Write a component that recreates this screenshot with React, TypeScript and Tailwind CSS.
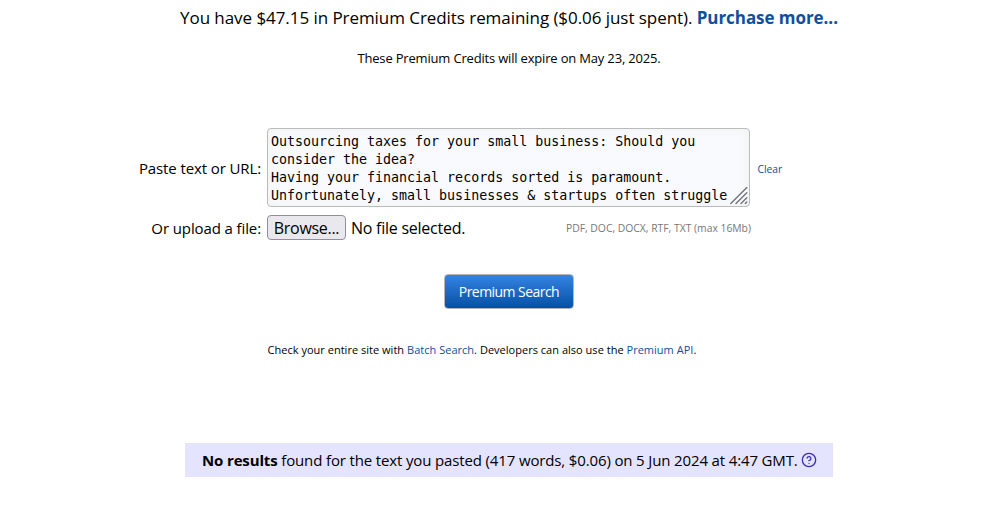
import { CircleHelp } from "lucide-react";

const pastedText = [
    "Outsourcing taxes for your small business: Should you",
    "consider the idea?",
    "Having your financial records sorted is paramount.",
    "Unfortunately, small businesses & startups often struggle",
];

function ResizeGrip() {
    return (
        <svg className="absolute right-px bottom-px" width="18" height="18" viewBox="0 0 18 18" fill="none" stroke="#74747c" strokeWidth="1.4" strokeLinecap="round">
            <path d="M0.8 16.5 16.8 0.5M6 16.5 16.8 5.7M11 16.5 16.8 10.7M15.3 16.5 16.8 15" />
        </svg>
    );
}

export default function App() {
    return (
        <div className="h-[528px] overflow-hidden bg-white pl-[15px] text-black font-['Open_Sans',sans-serif]">
            <p className="pt-[6px] text-center text-[17px] leading-6 tracking-[-0.06px] whitespace-nowrap">
                You have $47.15 in Premium Credits remaining ($0.06 just spent).{" "}
                <a href="#" className="font-bold text-[#0e509c]">Purchase more...</a>
            </p>
            <p className="mt-[19px] text-center text-[13px] leading-[18px] tracking-[-0.18px]">
                These Premium Credits will expire on May 23, 2025.
            </p>

            <form className="mt-[61px] -ml-[15px]">
                <div className="flex h-[79px] items-center">
                    <label className="mt-px w-[261px] text-right text-[15px] tracking-[-0.11px]">Paste text or URL:</label>
                    <div className="relative ml-1.5 h-[79px] w-[483px] rounded border border-[#bbb] bg-[#f8fafd] px-[3px] pt-[4px] shadow-[inset_0_0_10px_#f0f0f0] font-['DejaVu_Sans_Mono',monospace]">
                        {pastedText.map(line => (
                            <p key={line} className="text-[13.3px] leading-[18px] whitespace-pre">{line}</p>
                        ))}
                        <ResizeGrip />
                    </div>
                    <a href="#" className="mt-[5px] ml-[7.5px] text-[10.3px] text-[#0e509c]">Clear</a>
                </div>

                <div className="mt-2 flex h-[25px] w-[751px] items-center">
                    <label className="mt-0.5 w-[261px] text-right text-[15px] tracking-[-0.11px]">Or upload a file:</label>
                    <button type="button" className="ml-1.5 h-[25px] w-[79px] rounded border border-[#8f8f9d] bg-[#e9e9ed] pt-px text-[16px] leading-[23px] tracking-[-0.3px] whitespace-nowrap">
                        Browse...
                    </button>
                    <span className="ml-[5px] text-[16px] tracking-[-0.25px] whitespace-nowrap">No file selected.</span>
                    <span className="mt-0.5 ml-auto text-[10.35px] text-[#777]">PDF, DOC, DOCX, RTF, TXT (max 16Mb)</span>
                </div>
            </form>

            <div className="mt-[34px] flex justify-center">
                <button className="h-[35px] w-[130px] rounded border border-[#b5b5b5] bg-linear-to-b from-[#3384e3] to-[#0351a6] text-[14px] tracking-[-0.55px] text-white">
                    Premium Search
                </button>
            </div>

            <p className="mt-[33px] ml-[252.5px] text-[11px] leading-4 tracking-[0.02px] whitespace-nowrap">
                Check your entire site with <a href="#" className="text-[#0e509c]">Batch Search</a>. Developers can also use the{" "}
                <a href="#" className="text-[#0e509c]">Premium API</a>.
            </p>

            <div className="mx-auto mt-[85px] flex h-[34px] w-[648px] items-center bg-[#e4e4ff] pl-[17px] text-[15px] tracking-[-0.14px] whitespace-nowrap">
                <p><b>No results</b> found for the text you pasted (417 words, $0.06) on 5 Jun 2024 at 4:47 GMT.</p>
                <CircleHelp className="ml-[3px] size-4 text-[#3b30b0]" />
            </div>
        </div>
    );
}
